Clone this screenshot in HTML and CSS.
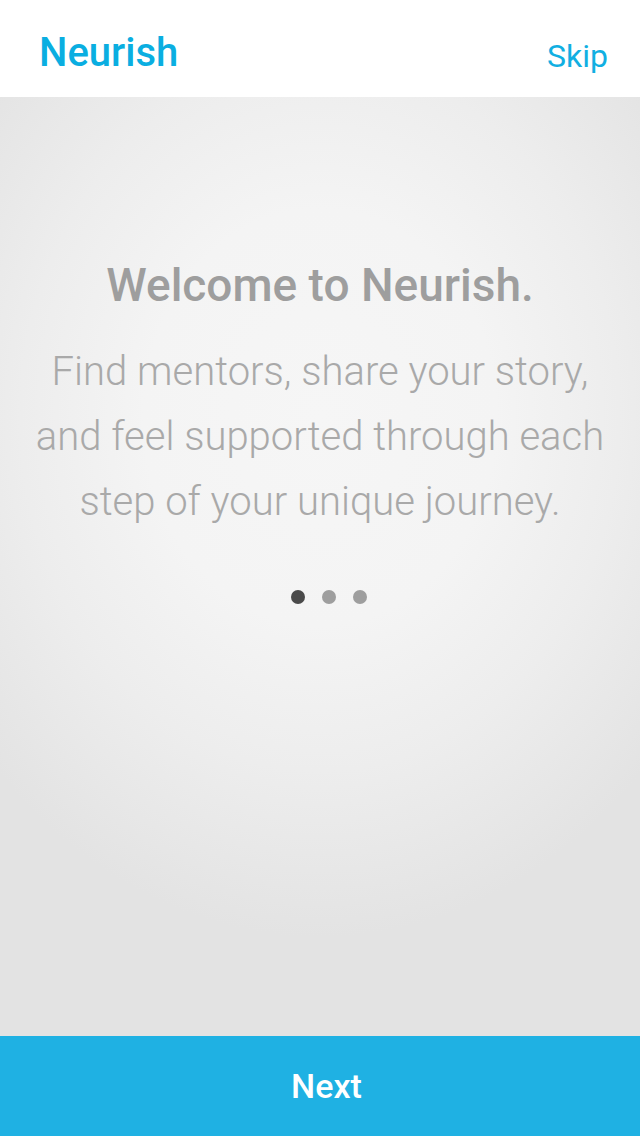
FILE: index.html
```html
<!DOCTYPE html>
<html>
<head>
<meta charset="utf-8">
<link rel="stylesheet" href="styles.css">
</head>
<body>
<div class="app">
  <header class="topbar">
    <div class="brand">Neurish</div>
    <div class="skip">Skip</div>
  </header>
  <main class="intro">
    <h1 class="title">Welcome to Neurish.</h1>
    <p class="text">Find mentors, share your story, and feel supported through each step of your unique journey.</p>
    <div class="dots">
      <span class="dot active"></span>
      <span class="dot"></span>
      <span class="dot"></span>
    </div>
  </main>
  <footer class="next">Next</footer>
</div>
</body>
</html>
```
FILE: styles.css
```css
html, body {
  margin: 0;
  padding: 0;
}
body {
  font-family: Roboto, "Noto Sans", sans-serif;
}
.app {
  width: 640px;
  height: 1136px;
  display: flex;
  flex-direction: column;
}
.topbar {
  height: 97px;
  background: #ffffff;
  display: flex;
  align-items: center;
  justify-content: space-between;
  padding: 0 32px 0 39px;
  flex: none;
}
.brand {
  color: #0aaee1;
  font-size: 40px;
  font-weight: 500;
  margin-top: 8px;
}
.skip {
  color: #11afe2;
  font-size: 32px;
  margin-top: 14px;
}
.intro {
  flex: 1;
  background: radial-gradient(ellipse 440px 520px at 320px 320px, #f6f6f6 0%, #f4f4f4 40%, #ededed 68%, #e3e3e3 100%);
  display: flex;
  flex-direction: column;
  align-items: center;
  padding-top: 156px;
}
.title {
  margin: 0;
  color: #9e9e9e;
  font-size: 46px;
  font-weight: 500;
  line-height: 64px;
}
.text {
  margin: 22px 0 0;
  color: #a9a9a9;
  font-size: 40px;
  font-weight: 300;
  line-height: 65px;
  text-align: center;
  width: 590px;
}
.dots {
  display: flex;
  gap: 17px;
  margin-top: 56px;
  margin-left: 18px;
}
.dot {
  width: 14px;
  height: 14px;
  border-radius: 50%;
  background: #9e9e9e;
}
.dot.active {
  background: #4a4a4a;
}
.next {
  height: 100px;
  flex: none;
  background: #1fb1e3;
  color: #ffffff;
  font-size: 34px;
  font-weight: 500;
  display: flex;
  align-items: center;
  justify-content: center;
  padding-left: 13px;
}
```
